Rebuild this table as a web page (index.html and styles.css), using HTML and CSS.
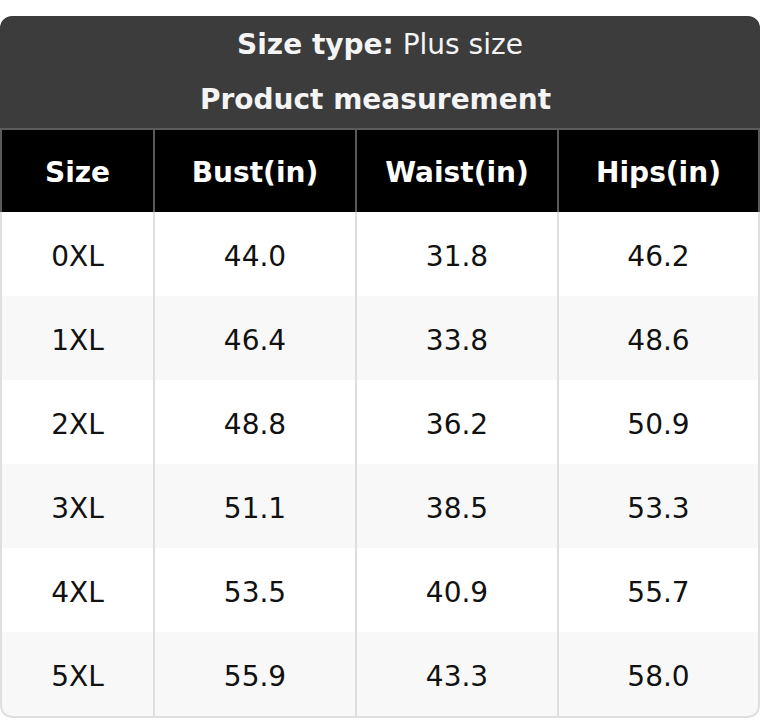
FILE: index.html
```html
<!DOCTYPE html>
<html>
<head>
<meta charset="utf-8">
<link rel="stylesheet" href="styles.css">
</head>
<body>
<div class="chart">
  <div class="title">
    <div class="title-line"><b>Size type:</b> Plus size</div>
    <div class="title-line second"><b>Product measurement</b></div>
  </div>
  <div class="grid">
    <div class="cell head first">Size</div><div class="cell head sep">Bust(in)</div><div class="cell head sep">Waist(in)</div><div class="cell head sep last">Hips(in)</div>
    <div class="cell first">0XL</div><div class="cell sep">44.0</div><div class="cell sep">31.8</div><div class="cell sep last">46.2</div>
    <div class="cell alt first">1XL</div><div class="cell alt sep">46.4</div><div class="cell alt sep">33.8</div><div class="cell alt sep last">48.6</div>
    <div class="cell first">2XL</div><div class="cell sep">48.8</div><div class="cell sep">36.2</div><div class="cell sep last">50.9</div>
    <div class="cell alt first">3XL</div><div class="cell alt sep">51.1</div><div class="cell alt sep">38.5</div><div class="cell alt sep last">53.3</div>
    <div class="cell first">4XL</div><div class="cell sep">53.5</div><div class="cell sep">40.9</div><div class="cell sep last">55.7</div>
    <div class="cell alt first bottom">5XL</div><div class="cell alt sep bottom">55.9</div><div class="cell alt sep bottom">43.3</div><div class="cell alt sep last bottom">58.0</div>
  </div>
</div>
</body>
</html>
```
FILE: styles.css
```css
html, body {
  margin: 0;
  padding: 0;
  background: #ffffff;
}
body {
  padding-top: 16px;
  font-family: "DejaVu Sans", sans-serif;
  font-size: 28px;
}
.chart {
  width: 760px;
  border-radius: 12px;
  overflow: hidden;
}
.title {
  background: #3c3c3c;
  color: #f4f4f4;
  text-align: center;
  border-bottom: 2px solid #5c5c5c;
}
.title-line {
  padding: 15px 0 13px;
  line-height: 28px;
  height: 28px;
}
.title-line.second {
  padding: 14px 9px 14px 0;
}
.grid {
  display: grid;
  grid-template-columns: 153px 202px 202px 203px;
}
.cell {
  box-sizing: border-box;
  height: 84px;
  padding-top: 4px;
  display: flex;
  align-items: center;
  justify-content: center;
  color: #111111;
  background: #ffffff;
}
.cell.alt {
  background: #f8f8f8;
}
.cell.sep,
.cell.first {
  border-left: 2px solid #dedede;
}
.cell.last {
  border-right: 2px solid #dedede;
}
.cell.bottom {
  height: 86px;
  border-bottom: 2px solid #dedede;
}
.cell.first.bottom {
  border-bottom-left-radius: 12px;
}
.cell.last.bottom {
  border-bottom-right-radius: 12px;
}
.cell.head {
  height: 82px;
  padding-top: 2px;
  background: #000000;
  color: #ffffff;
  font-weight: bold;
  border-color: #5a5a5a;
}
```
